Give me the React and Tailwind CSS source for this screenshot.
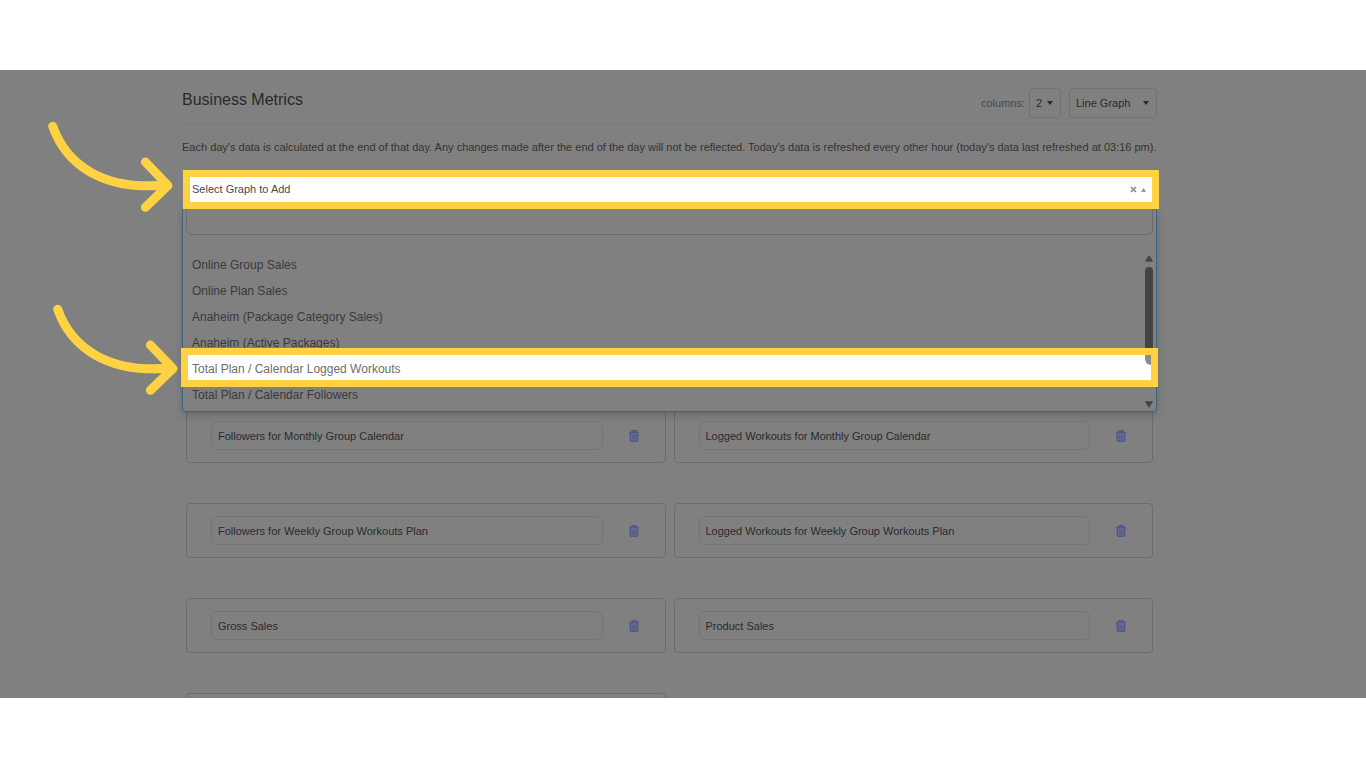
import React from 'react';

const graphOptions = [
    'Online Group Sales',
    'Online Plan Sales',
    'Anaheim (Package Category Sales)',
    'Anaheim (Active Packages)',
    'Total Plan / Calendar Logged Workouts',
    'Total Plan / Calendar Followers',
];

const activeOption = 4;

const graphs = [
    'Followers for Monthly Group Calendar',
    'Logged Workouts for Monthly Group Calendar',
    'Followers for Weekly Group Workouts Plan',
    'Logged Workouts for Weekly Group Workouts Plan',
    'Gross Sales',
    'Product Sales',
    'Net Sales',
];

const Arrow = ({ className }) => (
    <svg className={className} width="130" height="96" viewBox="0 0 130 96" fill="none" stroke="#ffd243" strokeWidth="9" strokeLinecap="round" strokeLinejoin="round" aria-hidden="true">
        <path d="M8.7 9.3C22 47 58 74 122 68" />
        <path d="M101.4 45L124 68.5L101.4 90.3" />
    </svg>
);

const Caret = ({ className }) => (
    <svg className={className} width="6" height="4" viewBox="0 0 6 4" fill="currentColor" aria-hidden="true">
        <path d="M0 0H6L3 4Z" />
    </svg>
);

const ScrollArrow = ({ className }) => (
    <svg className={className} width="8" height="7" viewBox="0 0 8 7" fill="currentColor" stroke="currentColor" strokeLinejoin="round" aria-hidden="true">
        <path d="M0.6 0.8H7.4L4 6.2Z" />
    </svg>
);

const TrashIcon = () => (
    <svg width="10" height="12" viewBox="0 0 10 12" fill="none" stroke="#50588c" aria-hidden="true">
        <path d="M0 2.5H10M3 2V0.7H7V2" strokeWidth="1.4" />
        <path d="M1.3 3V10.2Q1.3 11.3 2.4 11.3H7.6Q8.7 11.3 8.7 10.2V3" fill="#666b8a" strokeWidth="1.4" />
        <path d="M3.5 5V9.3M5 5V9.3M6.5 5V9.3" strokeWidth="0.7" />
    </svg>
);

const GraphCard = ({ name }) => (
    <div className="flex items-center rounded border border-[#6c6c6c] py-3 pl-6">
        <input
            type="text"
            aria-label="Graph name"
            defaultValue={name}
            className="h-[29px] min-w-0 flex-1 rounded-md border border-[#757575] bg-transparent px-1.5 text-[11px] text-[#2a2a2a] outline-none"
        />
        <button type="button" aria-label={`Delete ${name}`} className="flex w-[62px] justify-center">
            <TrashIcon />
        </button>
    </div>
);

const GraphPicker = () => (
    <div className="relative mt-3.5">
        <Arrow className="absolute -left-[138px] -top-[53px]" />
        <button
            type="button"
            aria-expanded="true"
            className="relative z-20 ml-px -mr-0.5 flex h-[39px] w-[calc(100%+1px)] items-center justify-between border-7 border-[#ffd243] bg-white pl-0.5 pr-1.5 text-[11px] text-[#4a4a4a]"
        >
            <span>Select Graph to Add</span>
            <span className="flex items-center gap-1 text-[#888888]">
                <svg width="7" height="7" viewBox="0 0 7 7" stroke="currentColor" strokeWidth="1.6" aria-hidden="true">
                    <path d="M1 1L6 6M6 1L1 6" />
                </svg>
                <Caret className="w-[5px] rotate-180" />
            </span>
        </button>

        <div className="absolute inset-x-0 top-full z-10 rounded-b-sm border border-t-0 border-[#3f6584] bg-[#808080] px-[3px] pb-[3px] shadow-[0_3px_8px_rgba(0,0,0,0.2)]">
            <input
                type="text"
                aria-label="Search graphs"
                className="block h-[26px] w-full rounded-b-md border border-t-0 border-[#6c6c6c] bg-transparent px-2 text-[11px] outline-none"
            />
            <ul role="listbox" aria-label="Graphs" className="relative mt-[17px] text-xs leading-[26px] text-[#3a3a3a]">
                {graphOptions.map((option, idx) => (
                    <li key={option} role="option" aria-selected={idx === activeOption} className="relative pl-1.5">
                        {idx === activeOption ? (
                            <>
                                <Arrow className="absolute -left-[137px] -top-14" />
                                <span className="absolute -inset-x-[5px] -bottom-[5px] -top-2 z-10 border-7 border-[#ffd243] bg-white" />
                                <span className="relative z-20 text-[#6e6e6e]">{option}</span>
                                <span className="absolute right-0.5 -top-px z-20 h-[10px] w-[6px] rounded-bl-full bg-[#8b8b8b]" />
                            </>
                        ) : (
                            option
                        )}
                    </li>
                ))}
                <li role="presentation" className="absolute right-0 top-[3px] flex h-[153px] w-2 flex-col items-center text-[#444444]">
                    <ScrollArrow className="rotate-180" />
                    <span className="mt-[5px] h-[90px] w-2 rounded-t-full bg-[#444444]" />
                    <ScrollArrow className="mt-auto" />
                </li>
            </ul>
        </div>
    </div>
);

const App = () => (
    <div className="flex h-screen flex-col bg-white py-[70px] font-['Liberation_Sans',Arial,sans-serif]">
        <main className="min-h-0 flex-1 overflow-hidden bg-[#808080] pr-[27px]">
            <div className="mx-auto max-w-[975px] pt-[18px]">
                <header className="flex items-start justify-between border-b border-[#797979] pb-[5px]">
                    <h1 className="text-base leading-6 text-[#2a2a2a]">Business Metrics</h1>
                    <div className="flex items-center text-[#2a2a2a]">
                        <label htmlFor="columns" className="mr-1 text-[11px] text-[#484848]">columns:</label>
                        <div className="relative mr-2">
                            <select id="columns" defaultValue="2" className="h-[30px] w-8 appearance-none rounded border border-[#717171] bg-transparent pl-1.5 text-[11px]">
                                <option value="2">2</option>
                            </select>
                            <Caret className="pointer-events-none absolute right-2 top-[13px]" />
                        </div>
                        <div className="relative">
                            <select aria-label="Graph type" defaultValue="line" className="h-[30px] w-[88px] appearance-none rounded border border-[#717171] bg-transparent pl-1.5 text-[11px]">
                                <option value="line">Line Graph</option>
                            </select>
                            <Caret className="pointer-events-none absolute right-2 top-[13px]" />
                        </div>
                    </div>
                </header>

                <p className="mt-3.5 whitespace-nowrap text-[11px] leading-[18px] text-[#333333]">
                    Each day's data is calculated at the end of that day. Any changes made after the end of the day will not be reflected. Today's data is refreshed every other hour (today's data last refreshed at 03:16 pm).
                </p>

                <GraphPicker />

                <section className="mt-[199px] grid grid-cols-2 gap-x-2 gap-y-10 px-1">
                    {graphs.map((name) => (
                        <GraphCard key={name} name={name} />
                    ))}
                </section>
            </div>
        </main>
    </div>
);

export default App;
